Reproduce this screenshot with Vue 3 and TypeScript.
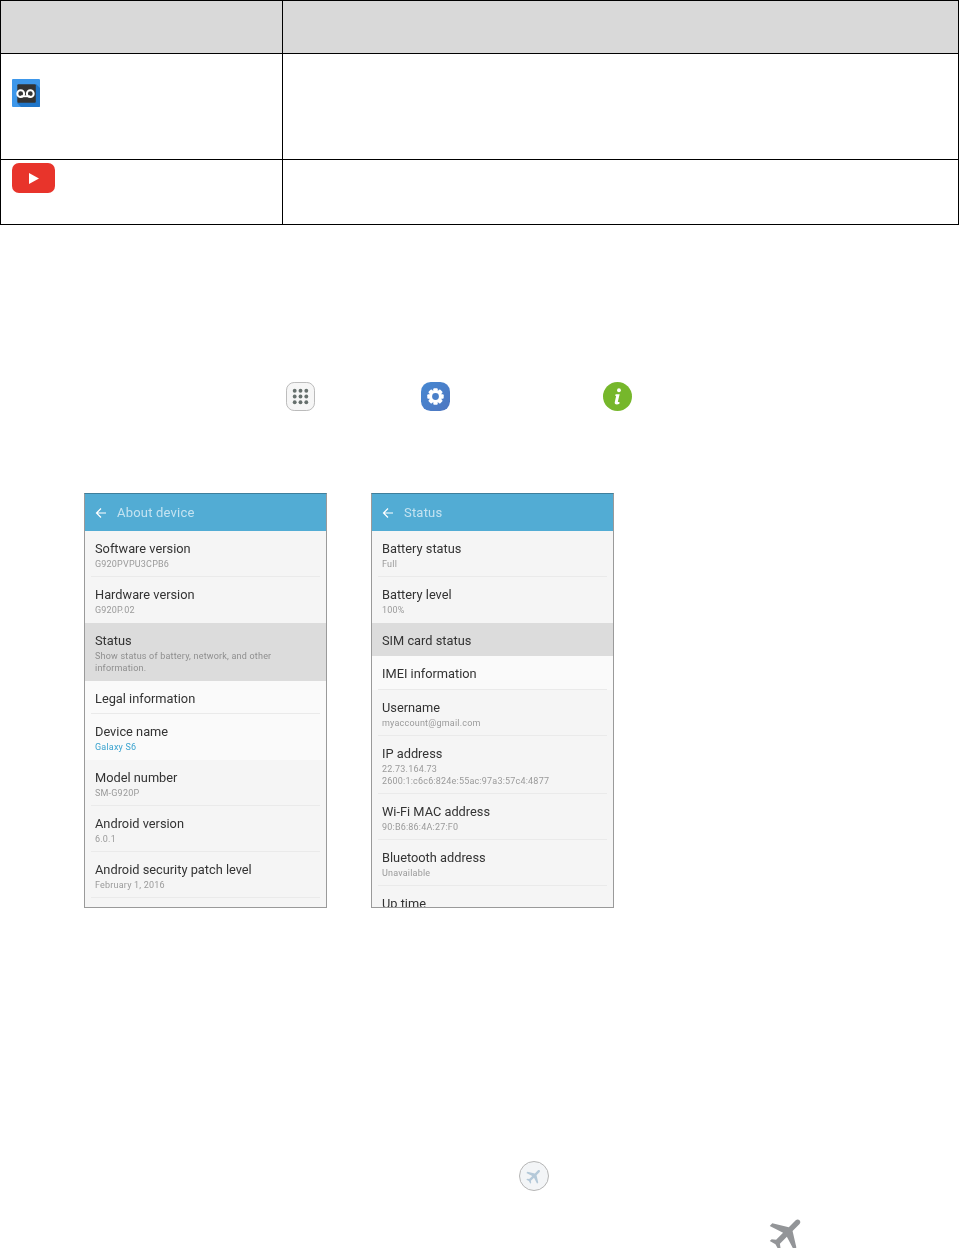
<script setup lang="ts">
interface Row { t: string; s?: string[]; cls?: string }
const aboutRows: Row[] = [
  { t: 'Software version', s: ['G920PVPU3CPB6'] },
  { t: 'Hardware version', s: ['G920P.02'], cls: 'last' },
  { t: 'Status', s: ['Show status of battery, network, and other', 'information.'], cls: 'sel' },
  { t: 'Legal information', cls: 'light' },
  { t: 'Device name', s: ['Galaxy S6'], cls: 'light link last' },
  { t: 'Model number', s: ['SM-G920P'] },
  { t: 'Android version', s: ['6.0.1'] },
  { t: 'Android security patch level', s: ['February 1, 2016'] },
]
const statusRows: Row[] = [
  { t: 'Battery status', s: ['Full'] },
  { t: 'Battery level', s: ['100%'], cls: 'last' },
  { t: 'SIM card status', cls: 'sel' },
  { t: 'IMEI information', cls: 'light tall' },
  { t: 'Username', s: ['myaccount@gmail.com'] },
  { t: 'IP address', s: ['22.73.164.73', '2600:1:c6c6:824e:55ac:97a3:57c4:4877'] },
  { t: 'Wi-Fi MAC address', s: ['90:B6:86:4A:27:F0'] },
  { t: 'Bluetooth address', s: ['Unavailable'] },
  { t: 'Up time' },
]
const screens = [
  { title: 'About device', rows: aboutRows },
  { title: 'Status', rows: statusRows },
]
const dots: number[][] = []
for (const y of [9, 15, 21]) for (const x of [9, 15, 21]) dots.push([x, y])
const plane = 'M21 16v-2l-8-5V3.5c0-.83-.67-1.5-1.5-1.5S10 2.67 10 3.5V9l-8 5v2l8-2.5V19l-2 1.5V22l3.5-1 3.5 1v-1.5L13 19v-5.5l8 2.5z'
</script>

<template>
  <div class="page">
    <table class="tbl">
      <colgroup><col class="c1" /><col /></colgroup>
      <tbody>
        <tr class="head"><td></td><td></td></tr>
        <tr class="r1">
          <td>
            <svg class="vm" width="28" height="28" viewBox="0 0 28 28">
              <rect width="28" height="28" rx="1" fill="#3d97ea" />
              <path d="M5 24 24 5l4 4v18a1 1 0 0 1-1 1H9z" fill="#1f75c8" />
              <rect x="5.300" y="5.300" width="18.500" height="18.500" rx="1" fill="#333" />
              <circle cx="8.700" cy="14.700" r="3.400" fill="#333" stroke="#fff" stroke-width="2" />
              <circle cx="18.300" cy="14.700" r="3.400" fill="#333" stroke="#fff" stroke-width="2" />
              <path d="M8.700 17.300h9.600" stroke="#fff" stroke-width="1.800" />
            </svg>
          </td>
          <td></td>
        </tr>
        <tr class="r2">
          <td>
            <svg class="yt" width="43" height="30" viewBox="0 0 43 30">
              <rect width="43" height="30" rx="7" fill="#e8342b" />
              <path d="M17 10v11l10-5.500z" fill="#fff" />
            </svg>
          </td>
          <td></td>
        </tr>
      </tbody>
    </table>

    <div class="icons">
      <svg class="ic-apps" width="29" height="29" viewBox="0 0 30 30">
        <rect x=".5" y=".5" width="29" height="29" rx="8" fill="#f6f6f6" stroke="#b9b9b9" />
        <circle v-for="d in dots" :key="d[0] + '-' + d[1]" :cx="d[0]" :cy="d[1]" r="2" fill="#66706d" />
      </svg>
      <svg class="ic-gear" width="29" height="29" viewBox="0 0 30 30">
        <defs>
          <linearGradient id="gearBg" x1="0" y1="0" x2="1" y2="1">
            <stop offset="0" stop-color="#4588d2" />
            <stop offset="1" stop-color="#4f76c0" />
          </linearGradient>
        </defs>
        <rect width="30" height="30" rx="10" fill="url(#gearBg)" />
        <g fill="#fff">
          <rect v-for="a in [0, 45, 90, 135]" :key="a" x="12.700" y="6.500" width="4.600" height="17" rx="1" :transform="`rotate(${a} 15 15)`" />
        </g>
        <circle cx="15" cy="15" r="6.400" fill="#fff" />
        <circle cx="15" cy="15" r="3.500" fill="#4a80c9" />
      </svg>
      <svg class="ic-info" width="29" height="29" viewBox="0 0 30 30">
        <circle cx="15" cy="15" r="15" fill="#76b72b" />
        <circle cx="16.500" cy="8.500" r="2" fill="#fff" />
        <path d="M13 12.800h4.200l-1.900 8h1.700v1.700a5 5 0 0 1-2.700.8c-1.800 0-2.500-1-2.100-2.600l1.400-6.100h-.9z" fill="#fff" />
      </svg>
    </div>

    <div class="screens">
      <div v-for="sc in screens" :key="sc.title" class="screen">
        <div class="bar">
          <svg class="back" width="12" height="12" viewBox="0 0 12 12">
            <path d="M11 6H1.500M6 1.500 1.500 6 6 10.500" fill="none" stroke="#fff" stroke-width="1.200" />
          </svg>
          <span class="bar-title">{{ sc.title }}</span>
        </div>
        <div v-for="r in sc.rows" :key="r.t" class="row" :class="r.cls">
          <div class="t">{{ r.t }}</div>
          <div v-for="l in r.s" :key="l" class="s">{{ l }}</div>
        </div>
      </div>
    </div>

    <div class="air1">
      <svg width="30" height="30" viewBox="0 0 30 30">
        <circle cx="15" cy="15" r="14.500" fill="#f3f5f7" stroke="#b5b5b5" />
        <g transform="translate(15 15) rotate(45) scale(.8) translate(-11.500 -12)">
          <path :d="plane" fill="#b4c9d9" />
        </g>
      </svg>
    </div>
    <div class="air2">
      <svg width="43" height="43" viewBox="0 0 24 24">
        <g transform="rotate(45 12 12)"><path :d="plane" fill="#939598" /></g>
      </svg>
    </div>
  </div>
</template>

<style>
html, body { margin: 0; background: #fff; }
</style>

<style scoped>
.page {
  width: 959px;
  height: 1248px;
  overflow: hidden;
  background: #fff;
  font-family: Roboto, "Liberation Sans", sans-serif;
}
.tbl {
  width: 959px;
  border-collapse: collapse;
  table-layout: fixed;
}
.c1 { width: 282px; }
.tbl td {
  border: 1px solid #000;
  padding: 0 0 0 11px;
  vertical-align: top;
  box-sizing: border-box;
}
.head td { background: #d9d9d9; height: 53px; }
.r1 td { height: 106px; }
.r2 td { height: 65px; }
.vm { display: block; margin-top: 25px; }
.yt { display: block; margin-top: 3px; }
.icons {
  display: flex;
  margin-top: 157px;
  padding-left: 286px;
  height: 30px;
  filter: blur(.3px);
}
.ic-gear { margin-left: 106px; }
.ic-info { margin-left: 153px; }
.screens {
  display: flex;
  gap: 44px;
  margin-top: 81px;
  padding-left: 84px;
}
.screen {
  width: 243px;
  height: 415px;
  box-sizing: border-box;
  border: 1px solid #9a9a9a;
  border-top-color: #3f7f9c;
  overflow: hidden;
  background: #f5f5f5;
  filter: blur(.3px);
}
.bar {
  height: 37px;
  background: #52acd4;
  display: flex;
  align-items: center;
  padding-left: 10px;
  color: #c4e3f1;
}
.back { margin-right: 10px; }
.bar-title { font-size: 13px; letter-spacing: .2px; }
.row {
  box-sizing: border-box;
  padding: 10px 0 7.500px 10px;
  position: relative;
  color: #333;
}
.row:not(:has(.s)) { padding-bottom: 6.500px; }
.row.tall { padding-bottom: 7.500px; }
.row::after {
  content: "";
  position: absolute;
  left: 6px;
  right: 6px;
  bottom: 0;
  height: 1px;
  background: #eaeaea;
}
.row.last::after, .row.sel::after { display: none; }
.row.light { background: #fafafa; }
.row.sel { background: #dcdcdc; }
.t { font-size: 12.800px; line-height: 16.500px; }
.s { font-size: 9px; line-height: 12px; color: #9a9a9a; letter-spacing: .2px; }
.sel .s { color: #8e8e8e; }
.link .s { color: #3aa3cf; }
.air1 { margin-top: 253px; padding-left: 519px; height: 30px; }
.air1 svg, .air2 svg { display: block; }
.air2 { margin-top: 21px; padding-left: 766px; }
</style>
